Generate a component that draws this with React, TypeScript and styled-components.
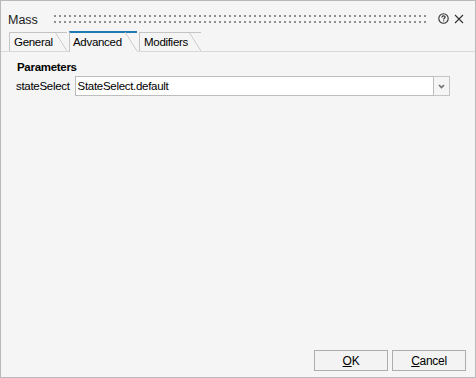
import styled, { createGlobalStyle } from "styled-components";

const GlobalStyle = createGlobalStyle`
  html, body {
    margin: 0;
    padding: 0;
    background: #f5f5f5;
  }
  body {
    font-family: "Liberation Sans", Arial, sans-serif;
    font-size: 11.5px;
    letter-spacing: -0.3px;
    color: #000;
  }
`;

const tabs = [
  { name: "General", width: 58 },
  { name: "Advanced", width: 68 },
  { name: "Modifiers", width: 62 },
];

export default function App() {
  return (
    <>
      <GlobalStyle />
      <Window>
        <TitleBar>
          <Title>Mass</Title>
          <Grip />
          <IconButton aria-label="help">
            <svg width="11" height="11" viewBox="0 0 11 11">
              <circle cx="5.5" cy="5.5" r="4.7" fill="none" stroke="#333" strokeWidth="1.1" />
              <path
                d="M3.9 4.4 C3.9 3.3 4.7 2.9 5.5 2.9 C6.4 2.9 7.1 3.5 7.1 4.2 C7.1 5.2 5.6 5.3 5.6 6.4"
                fill="none"
                stroke="#333"
                strokeWidth="1.1"
              />
              <rect x="5.1" y="7.3" width="1.1" height="1.1" fill="#333" />
            </svg>
          </IconButton>
          <IconButton aria-label="close">
            <svg width="10" height="10" viewBox="0 0 10 10">
              <path d="M1 1 L9 9 M9 1 L1 9" stroke="#333" strokeWidth="1.1" />
            </svg>
          </IconButton>
        </TitleBar>

        <TabBar>
          {tabs.map((t) => (
            <Tab key={t.name} $width={t.width} $active={t.name === "Advanced"}>
              {t.name}
            </Tab>
          ))}
        </TabBar>

        <Content>
          <SectionTitle>Parameters</SectionTitle>
          <Row>
            <Label>stateSelect</Label>
            <Combo>
              <ComboText>StateSelect.default</ComboText>
              <ComboButton>
                <svg width="7" height="5" viewBox="0 0 7 5">
                  <path d="M1 1 L3.5 3.5 L6 1" fill="none" stroke="#707070" strokeWidth="1.7" />
                </svg>
              </ComboButton>
            </Combo>
          </Row>
        </Content>

        <Footer>
          <Button>
            <u>O</u>K
          </Button>
          <Button>
            <u>C</u>ancel
          </Button>
        </Footer>
      </Window>
    </>
  );
}

const Window = styled.div`
  width: 476px;
  height: 378px;
  box-sizing: border-box;
  border: 1px solid #b9b9b9;
  background: #f5f5f5;
  display: flex;
  flex-direction: column;
`;

const TitleBar = styled.div`
  height: 30px;
  display: flex;
  align-items: flex-start;
  padding: 0 9px 0 7px;
`;

const Title = styled.div`
  font-size: 12.5px;
  letter-spacing: 0;
  line-height: 14px;
  margin-top: 12px;
  color: #1a1a1a;
`;

const Grip = styled.div`
  flex: 1;
  height: 8px;
  margin: 14px 8px 0 16px;
  background-image: conic-gradient(at 2px 2px, transparent 75%, #8f8f8f 0);
  background-size: 5px 6px;
`;

const IconButton = styled.div`
  width: 15px;
  height: 15px;
  margin-top: 10px;
  display: flex;
  align-items: center;
  justify-content: center;
`;

const TabBar = styled.div`
  height: 20px;
  display: flex;
  align-items: flex-end;
  gap: 2px;
  padding-left: 8px;
  border-bottom: 1px solid #d9d9d9;
`;

const Tab = styled.div<{ $active?: boolean; $width: number }>`
  position: relative;
  box-sizing: border-box;
  width: ${(p) => p.$width}px;
  height: ${(p) => (p.$active ? "21px" : "19px")};
  line-height: 18px;
  padding-left: ${(p) => (p.$active ? "3px" : "4px")};
  border-left: 1px solid #c4c4c4;
  border-top: ${(p) => (p.$active ? "2px solid #1f7ab4" : "1px solid #c4c4c4")};
  margin-bottom: ${(p) => (p.$active ? "-1px" : "0")};
  background: ${(p) => (p.$active ? "#f5f5f5" : "transparent")};
  color: #000;
  white-space: nowrap;

  &::after {
    content: "";
    position: absolute;
    top: -1px;
    right: 0;
    width: 12px;
    bottom: ${(p) => (p.$active ? "1px" : "0")};
    background: linear-gradient(
      to top right,
      #f5f5f5 calc(50% - 0.7px),
      #c4c4c4 50%,
      transparent calc(50% + 0.7px)
    );
  }
`;

const Content = styled.div`
  padding: 8px 25px 0 15px;
  display: flex;
  flex-direction: column;
`;

const SectionTitle = styled.div`
  font-weight: bold;
  line-height: 14px;
  padding-left: 1px;
`;

const Row = styled.div`
  display: flex;
  align-items: center;
  margin-top: 2px;
`;

const Label = styled.div`
  margin-right: 5px;
  line-height: 20px;
`;

const Combo = styled.div`
  flex: 1;
  height: 20px;
  display: flex;
`;

const ComboText = styled.div`
  flex: 1;
  box-sizing: border-box;
  border: 1px solid #bdbdbd;
  background: #fff;
  padding-left: 2px;
  line-height: 18px;
`;

const ComboButton = styled.div`
  width: 16px;
  box-sizing: border-box;
  border: 1px solid #c4c4c4;
  border-left: none;
  background: #f5f5f5;
  display: flex;
  align-items: center;
  justify-content: center;
`;

const Footer = styled.div`
  margin-top: auto;
  display: flex;
  justify-content: flex-end;
  gap: 4px;
  padding: 0 9px 6px 0;
`;

const Button = styled.div`
  width: 74px;
  height: 21px;
  box-sizing: border-box;
  border: 1px solid #adadad;
  background: #f3f3f3;
  display: flex;
  align-items: center;
  justify-content: center;
  font-size: 12px;

  u {
    text-underline-offset: 1px;
  }
`;
